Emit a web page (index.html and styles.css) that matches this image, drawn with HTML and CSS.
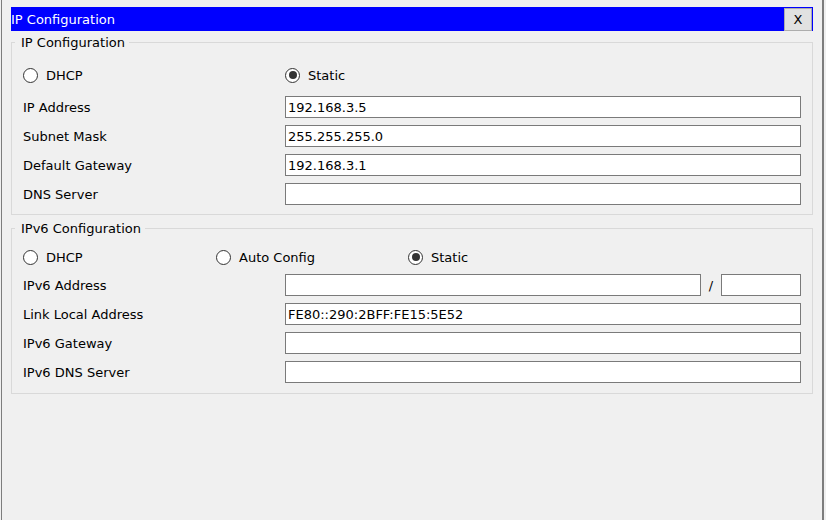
FILE: index.html
```html
<!DOCTYPE html>
<html>
<head>
<meta charset="utf-8">
<title>IP Configuration</title>
<link rel="stylesheet" href="styles.css">
</head>
<body>
<div class="frame">
  <div class="titlebar">
    <span class="title">IP Configuration</span>
    <button class="close">X</button>
  </div>

  <fieldset class="group group-ip">
    <legend><span class="legend-text">IP Configuration</span></legend>
    <div class="radios radios-ip">
      <label class="opt"><span class="radio"></span>DHCP</label>
      <label class="opt"><span class="radio on"></span>Static</label>
    </div>
    <div class="rows">
      <span class="lbl">IP Address</span>
      <input class="field" type="text" value="192.168.3.5" readonly>
      <span class="lbl">Subnet Mask</span>
      <input class="field" type="text" value="255.255.255.0" readonly>
      <span class="lbl">Default Gateway</span>
      <input class="field" type="text" value="192.168.3.1" readonly>
      <span class="lbl">DNS Server</span>
      <input class="field" type="text" value="" readonly>
    </div>
  </fieldset>

  <fieldset class="group group-v6">
    <legend><span class="legend-text">IPv6 Configuration</span></legend>
    <div class="radios radios-v6">
      <label class="opt"><span class="radio"></span>DHCP</label>
      <label class="opt"><span class="radio"></span>Auto Config</label>
      <label class="opt"><span class="radio on"></span>Static</label>
    </div>
    <div class="rows">
      <span class="lbl">IPv6 Address</span>
      <div class="prefix-group">
        <input class="field field-grow" type="text" value="" readonly>
        <span class="slash">/</span>
        <input class="field field-prefix" type="text" value="" readonly>
      </div>
      <span class="lbl">Link Local Address</span>
      <input class="field" type="text" value="FE80::290:2BFF:FE15:5E52" readonly>
      <span class="lbl">IPv6 Gateway</span>
      <input class="field" type="text" value="" readonly>
      <span class="lbl">IPv6 DNS Server</span>
      <input class="field" type="text" value="" readonly>
    </div>
  </fieldset>
</div>
</body>
</html>
```

FILE: styles.css
```css
html, body {
  margin: 0;
  padding: 0;
  background: #f0f0f0;
}

body {
  font-family: "DejaVu Sans", Verdana, sans-serif;
  font-size: 13px;
  color: #000;
  width: 826px;
  height: 520px;
  overflow: hidden;
}

.frame {
  box-sizing: border-box;
  margin-left: 1px;
  width: 823px;
  height: 520px;
  border-left: 1px solid #7d7d7d;
  border-right: 2px solid #7d7d7d;
  padding: 7px 9px 0 9px;
}

.titlebar {
  height: 24px;
  background: #0000ff;
  color: #fff;
  display: flex;
  align-items: center;
  justify-content: space-between;
}

.title {
  line-height: 16px;
  padding-top: 1px;
}

.close {
  box-sizing: border-box;
  width: 28px;
  height: 23px;
  margin: 1px 1px 0 0;
  align-self: flex-start;
  background: #e1e1e1;
  border: 1px solid #adadad;
  font-family: "DejaVu Sans", Verdana, sans-serif;
  font-size: 13px;
  color: #000;
  padding: 0;
}

.group {
  margin: 0;
  border: 1px solid #d9d9d9;
  padding: 0 11px 9px 3px;
  min-width: 0;
}

.group-ip {
  margin-top: 3px;
}

.group-v6 {
  margin-top: 5px;
  padding-bottom: 10px;
}

.group legend {
  padding: 0 4px 0 6px;
  line-height: 16px;
}

.legend-text {
  display: inline-block;
  transform: translateY(1px);
}

.radios {
  display: grid;
  height: 22px;
  align-items: center;
  padding-left: 8px;
}

.radios-ip {
  grid-template-columns: 262px 1fr;
  margin-top: 14px;
  margin-bottom: 10px;
}

.radios-v6 {
  grid-template-columns: 193px 192px 1fr;
  margin-top: 10px;
  margin-bottom: 6px;
}

.opt {
  display: flex;
  align-items: center;
}

.radio {
  box-sizing: border-box;
  width: 15px;
  height: 15px;
  border: 1px solid #333;
  border-radius: 50%;
  background: #fff;
  margin-right: 8px;
  display: flex;
  align-items: center;
  justify-content: center;
}

.radio.on::after {
  content: "";
  width: 8px;
  height: 8px;
  border-radius: 50%;
  background: #333;
}

.rows {
  display: grid;
  grid-template-columns: 262px 1fr;
  grid-auto-rows: 22px;
  row-gap: 7px;
  padding-left: 8px;
  align-items: center;
}

.lbl {
  line-height: 16px;
  padding-top: 2px;
}

.field {
  box-sizing: border-box;
  height: 22px;
  width: 100%;
  margin: 0;
  border: 1px solid #7a7a7a;
  background: #fff;
  padding: 0 2px;
  font-family: "DejaVu Sans", Verdana, sans-serif;
  font-size: 13px;
  color: #000;
  outline: none;
}

.prefix-group {
  display: flex;
  align-items: center;
  height: 22px;
}

.field-grow {
  flex: 1;
  width: auto;
  min-width: 0;
}

.slash {
  width: 20px;
  text-align: center;
}

.field-prefix {
  width: 80px;
  flex: none;
}
```
